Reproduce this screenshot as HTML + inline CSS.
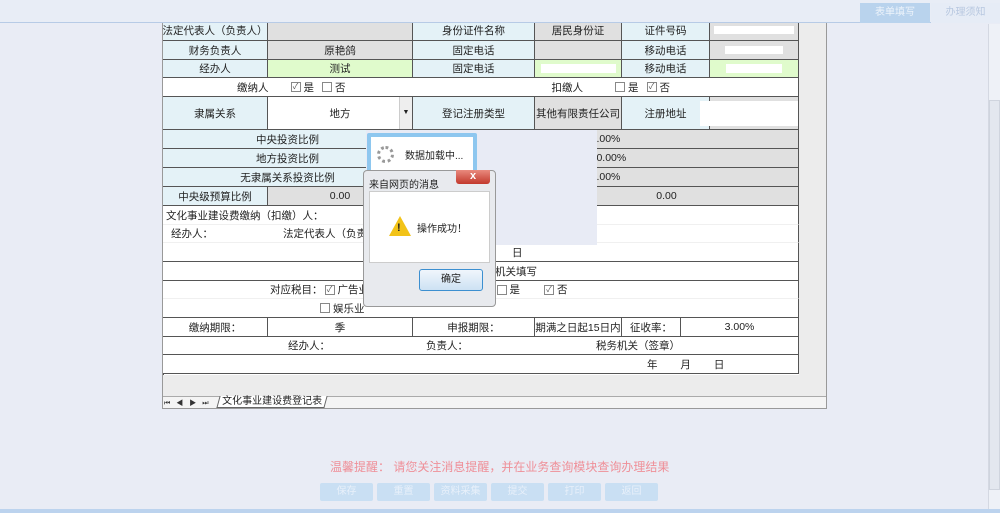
<!DOCTYPE html>
<html><head><meta charset="utf-8"><style>
*{margin:0;padding:0;box-sizing:border-box}
body{width:1000px;height:513px;background:#e9ecf5;font-family:"Liberation Sans","Noto Sans CJK SC",sans-serif;font-size:10.5px;color:#222;position:relative;overflow:hidden}
.a{position:absolute}
.c{position:absolute;display:flex;align-items:center;justify-content:center;border-right:1px solid #555;border-bottom:1px solid #555;white-space:nowrap}
.lb{background:#e4f2f7}.gr{background:#e0e0e0}.gn{background:#e0fbcc}.wh{background:#fff}
.cb{display:inline-block;width:10px;height:10px;border:1px solid #888;background:#fff;margin:0 3px 0 8px;font-size:8px;line-height:8px;text-align:center;color:#555}
.btn{position:absolute;top:483px;width:53px;height:18px;background:#c9dff3;color:#e8f0fa;font-size:10px;text-align:center;line-height:18px;border-radius:2px}
</style></head><body>
<div class="a" style="left:162px;top:14px;width:665px;height:395px;background:#ececec;border:1px solid #999;border-top:none"></div>
<div class="a" style="left:163px;top:14px;width:636px;height:361px;background:#fff;border-left:1px solid #555"></div>
<!-- rows -->
<div class="c lb" style="left:163px;top:14px;width:105px;height:27px;padding-top:6px">法定代表人（负责人）</div>
<div class="c gr" style="left:268px;top:14px;width:145px;height:27px"></div>
<div class="c lb" style="left:413px;top:14px;width:122px;height:27px;padding-top:6px">身份证件名称</div>
<div class="c gr" style="left:535px;top:14px;width:87px;height:27px;padding-top:6px">居民身份证</div>
<div class="c lb" style="left:622px;top:14px;width:88px;height:27px;padding-top:6px">证件号码</div>
<div class="c gr" style="left:710px;top:14px;width:89px;height:27px;padding-top:6px"><span style="background:#fff;width:80px;height:8px"></span></div>
<div class="c lb" style="left:163px;top:41px;width:105px;height:19px">财务负责人</div>
<div class="c gr" style="left:268px;top:41px;width:145px;height:19px">原艳鸽</div>
<div class="c lb" style="left:413px;top:41px;width:122px;height:19px">固定电话</div>
<div class="c gr" style="left:535px;top:41px;width:87px;height:19px"></div>
<div class="c lb" style="left:622px;top:41px;width:88px;height:19px">移动电话</div>
<div class="c gr" style="left:710px;top:41px;width:89px;height:19px"><span style="background:#fff;width:58px;height:8px"></span></div>
<div class="c lb" style="left:163px;top:60px;width:105px;height:18px">经办人</div>
<div class="c gn" style="left:268px;top:60px;width:145px;height:18px">测试</div>
<div class="c lb" style="left:413px;top:60px;width:122px;height:18px">固定电话</div>
<div class="c gn" style="left:535px;top:60px;width:87px;height:18px"><span style="background:#fff;width:75px;height:9px"></span></div>
<div class="c lb" style="left:622px;top:60px;width:88px;height:18px">移动电话</div>
<div class="c gn" style="left:710px;top:60px;width:89px;height:18px"><span style="background:#fff;width:56px;height:9px"></span></div>
<div class="c wh" style="left:163px;top:78px;width:636px;height:19px;justify-content:flex-start"><span style="margin-left:74px">缴纳人</span><span class="cb" style="margin-left:22px">✓</span>是<span class="cb">&nbsp;</span>否<span style="margin-left:206px">扣缴人</span><span class="cb" style="margin-left:32px">&nbsp;</span>是<span class="cb">✓</span>否</div>
<div class="c lb" style="left:163px;top:97px;width:105px;height:33px">隶属关系</div>
<div class="c wh" style="left:268px;top:97px;width:145px;height:33px">地方<span class="a" style="right:0;top:0;width:13px;height:32px;background:#eee;border-left:1px solid #ccc;font-size:7px;text-align:center;line-height:32px">▼</span></div>
<div class="c lb" style="left:413px;top:97px;width:122px;height:33px">登记注册类型</div>
<div class="c gr" style="left:535px;top:97px;width:87px;height:33px">其他有限责任公司</div>
<div class="c lb" style="left:622px;top:97px;width:88px;height:33px">注册地址</div>
<div class="c gr" style="left:710px;top:97px;width:89px;height:33px"><span style="background:#fff;width:103px;height:25px;margin-left:-10px"></span></div>
<div class="c lb" style="left:163px;top:130px;width:250px;height:19px">中央投资比例</div>
<div class="c gr" style="left:413px;top:130px;width:386px;height:19px">0.00%</div>
<div class="c lb" style="left:163px;top:149px;width:250px;height:19px">地方投资比例</div>
<div class="c gr" style="left:413px;top:149px;width:386px;height:19px">100.00%</div>
<div class="c lb" style="left:163px;top:168px;width:250px;height:19px">无隶属关系投资比例</div>
<div class="c gr" style="left:413px;top:168px;width:386px;height:19px">0.00%</div>
<div class="c lb" style="left:163px;top:187px;width:105px;height:19px">中央级预算比例</div>
<div class="c gr" style="left:268px;top:187px;width:145px;height:19px">0.00</div>
<div class="c lb" style="left:413px;top:187px;width:122px;height:19px"></div>
<div class="c gr" style="left:535px;top:187px;width:264px;height:19px">0.00</div>
<div class="c wh" style="left:163px;top:206px;width:636px;height:19px;justify-content:flex-start;border-bottom-color:#f0f0f0;padding-left:3px">文化事业建设费缴纳（扣缴）人：</div>
<div class="c wh" style="left:163px;top:225px;width:636px;height:18px;justify-content:flex-start;border-bottom-color:#f0f0f0;padding-left:8px">经办人：<span style="margin-left:70px">法定代表人（负责人）</span></div>
<div class="c wh" style="left:163px;top:243px;width:636px;height:19px;justify-content:flex-start"><span style="margin-left:349px">日</span></div>
<div class="c wh" style="left:163px;top:262px;width:636px;height:19px;justify-content:flex-start"><span style="margin-left:311px">税务机关填写</span></div>
<div class="c wh" style="left:163px;top:281px;width:636px;height:18px;justify-content:flex-start;border-bottom-color:#f0f0f0"><span style="margin-left:107px">对应税目：</span><span class="cb" style="margin-left:2px">✓</span>广告业<span style="margin-left:75px">（广告业）</span><span class="cb" style="margin-left:0">&nbsp;</span>是<span class="cb" style="margin-left:24px">✓</span>否</div>
<div class="c wh" style="left:163px;top:299px;width:636px;height:19px;justify-content:flex-start"><span class="cb" style="margin-left:157px">&nbsp;</span>娱乐业</div>
<div class="c wh" style="left:163px;top:318px;width:105px;height:19px">缴纳期限：</div>
<div class="c wh" style="left:268px;top:318px;width:145px;height:19px">季</div>
<div class="c wh" style="left:413px;top:318px;width:122px;height:19px">申报期限：</div>
<div class="c wh" style="left:535px;top:318px;width:87px;height:19px">期满之日起15日内</div>
<div class="c wh" style="left:622px;top:318px;width:59px;height:19px">征收率：</div>
<div class="c wh" style="left:681px;top:318px;width:118px;height:19px">3.00%</div>
<div class="c wh" style="left:163px;top:337px;width:636px;height:18px;justify-content:flex-start"><span style="margin-left:125px">经办人：</span><span style="margin-left:96px">负责人：</span><span style="margin-left:128px">税务机关（签章）</span></div>
<div class="c wh" style="left:163px;top:355px;width:636px;height:19px;justify-content:flex-start"><span style="margin-left:484px;word-spacing:20px">年 月 日</span></div>
<!-- header -->
<div class="a" style="left:0;top:0;width:1000px;height:23px;background:#e8edf6;border-bottom:1px solid #b7cbe6"></div>
<div class="a" style="left:860px;top:3px;width:70px;height:20px;background:#b9d3ed;color:#eef4fb;text-align:center;line-height:20px;font-size:10px">表单填写</div>
<div class="a" style="left:931px;top:3px;width:69px;height:20px;background:#e6ecf6;color:#b8c8e0;text-align:center;line-height:20px;font-size:10px">办理须知</div>
<div class="a" style="left:988px;top:24px;width:12px;height:489px;background:#eef1f7;border-left:1px solid #d4d8e2"></div>
<div class="a" style="left:989px;top:100px;width:11px;height:390px;background:#e3e7ef;border:1px solid #cfd4de"></div>
<!-- tab bar -->
<div class="a" style="left:163px;top:396px;width:663px;height:12px;background:#f4f4f4;border-top:1px solid #aaa"></div>
<div class="a" style="left:164px;top:398px;font-size:7px;letter-spacing:6px;color:#333">⏮◀▶⏭</div>
<div class="a" style="left:218px;top:396px;width:108px;height:12px;background:#fff;border:1px solid #666;border-top:none;font-size:10px;line-height:11px;text-align:center;transform:skewX(-15deg)"><span style="display:inline-block;transform:skewX(15deg)">文化事业建设费登记表</span></div>
<!-- overlay -->
<div class="a" style="left:366px;top:130px;width:231px;height:115px;background:#e8ebf5"></div>
<div class="a" style="left:367px;top:133px;width:110px;height:42px;background:#8ec7ef;border-radius:2px;padding:4px"><div style="background:#fff;height:100%;display:flex;align-items:center;padding-left:6px;font-size:10px"><span style="display:inline-block;width:17px;height:17px;border:3px dotted #999;border-radius:50%;margin-right:11px"></span>数据加载中...</div></div>
<div class="a" style="left:363px;top:170px;width:133px;height:137px;background:#e8eaee;border:1px solid #999;border-radius:4px"></div>
<div class="a" style="left:369px;top:176px;font-size:10px">来自网页的消息</div>
<div class="a" style="left:456px;top:170px;width:34px;height:14px;background:linear-gradient(#e98a7e,#c2392c);border-radius:0 0 3px 3px;color:#fff;font-size:11px;font-weight:bold;text-align:center;line-height:13px">x</div>
<div class="a" style="left:369px;top:191px;width:121px;height:72px;background:#fff;border:1px solid #ccc"></div>
<div class="a" style="left:389px;top:216px;width:0;height:0;border-left:11px solid transparent;border-right:11px solid transparent;border-bottom:20px solid #f2c318"></div>
<div class="a" style="left:397px;top:222px;font-size:11px;font-weight:bold">!</div>
<div class="a" style="left:417px;top:220px;font-size:10px">操作成功！</div>
<div class="a" style="left:419px;top:269px;width:64px;height:22px;border:1px solid #3c8fd0;border-radius:3px;background:linear-gradient(#f0f6fc,#cde2f3);text-align:center;line-height:20px;font-size:10px">确定</div>
<!-- bottom -->
<div class="a" style="left:330px;top:458px;font-size:12px;color:#ef8f98">温馨提醒： 请您关注消息提醒，并在业务查询模块查询办理结果</div>
<div class="btn" style="left:320px">保存</div>
<div class="btn" style="left:377px">重置</div>
<div class="btn" style="left:434px">资料采集</div>
<div class="btn" style="left:491px">提交</div>
<div class="btn" style="left:548px">打印</div>
<div class="btn" style="left:605px">返回</div>
<div class="a" style="left:0;top:509px;width:1000px;height:4px;background:#bcd3ee"></div>
</body></html>
